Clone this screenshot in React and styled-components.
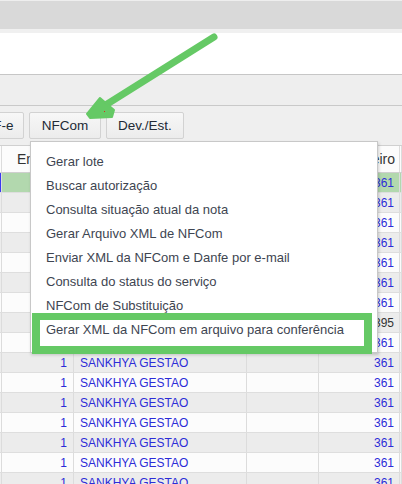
import React from 'react'
import styled, {createGlobalStyle} from 'styled-components'

const green = '#65c965'
const linkBlue = '#2c2cd8'

const GlobalStyle = createGlobalStyle`
	html, body {
		margin: 0;
		padding: 0;
		background: #fff;
		font-family: "Liberation Sans", Arial, sans-serif;
	}
`

const Page = styled.div`
	position: relative;
	width: 402px;
	height: 484px;
	overflow: hidden;
`

const TopBar = styled.div`
	height: 28px;
	border-top: 1px solid #eeeeee;
	background: #d9d9d9;
`

const TopStrip = styled.div`
	height: 4px;
	background: #f0f0f0;
`

const FilterArea = styled.div`
	height: 41px;
	background: #fff;
	border-bottom: 1px solid #c6c6c6;
`

const Panel = styled.div`
	height: 30px;
	background: #eeeeee;
	border-bottom: 1px solid #c9c9c9;
`

const Toolbar = styled.div`
	height: 39px;
	display: flex;
	align-items: flex-start;
	gap: 5px;
	padding-top: 6px;
	box-sizing: border-box;
	margin-left: -27px;
	background: #efefef;
`

const ToolButton = styled.button`
	flex: none;
	width: ${p => p.$w}px;
	height: 27px;
	padding: 0;
	border: 1px solid #d2d2d2;
	border-radius: 2px;
	background: linear-gradient(#f7f7f7, #ececec);
	color: #222a36;
	font-family: "Liberation Sans", Arial, sans-serif;
	font-size: 13.5px;
	text-align: center;
`

const Table = styled.div`
	border-top: 1px solid #d0d0d0;
`

const Row = styled.div`
	display: grid;
	grid-template-columns: 2px 72px 173px 72px 81px 2px;
	height: ${p => (p.$head ? 26 : 19)}px;
	border-bottom: 1px solid ${p => (p.$head ? '#cfcfcf' : '#dedede')};
	background: ${p => (p.$selected ? '#b2d8ae' : p.$odd ? '#ececec' : '#fcfcfc')};
	font-size: ${p => (p.$head ? 14 : 12)}px;
	color: ${p => (p.$head ? '#333' : linkBlue)};
	line-height: ${p => (p.$head ? 26 : 20)}px;
`

const Cell = styled.div`
	border-right: 1px solid #dcdcdc;
	padding: 0 ${p => p.$pr || 0}px 0 ${p => p.$pl || 0}px;
	text-align: ${p => (p.$right ? 'right' : 'left')};
	white-space: nowrap;
	overflow: hidden;
	color: ${p => (p.$plain ? '#333' : 'inherit')};
	background: ${p => (p.$mark ? '#3a3af0' : 'transparent')};
`

const Menu = styled.div`
	position: absolute;
	left: 30px;
	top: 141px;
	width: 346px;
	padding: 8px 0 10px;
	background: #fff;
	border: 1px solid #c8c8c8;
	box-shadow: 1px 2px 3px rgba(0, 0, 0, 0.18);
	z-index: 2;
`

const MenuItem = styled.div`
	height: 24px;
	line-height: 24px;
	padding-left: 15px;
	font-size: 13px;
	color: #3e4551;
	white-space: nowrap;
`

const Highlight = styled.div`
	position: absolute;
	left: 32px;
	top: 313px;
	width: 324px;
	height: 26px;
	border: solid ${green};
	border-width: 7px 8px 8px 8px;
	z-index: 3;
`

const Arrow = styled.svg`
	position: absolute;
	left: 80px;
	top: 28px;
	z-index: 3;
`

const menuItems = [
	'Gerar lote',
	'Buscar autorização',
	'Consulta situação atual da nota',
	'Gerar Arquivo XML de NFCom',
	'Enviar XML da NFCom e Danfe por e-mail',
	'Consulta do status do serviço',
	'NFCom de Substituição',
	'Gerar XML da NFCom em arquivo para conferência',
]

const rows = Array.from({length: 16}, (_, i) => ({
	value: i === 7 ? '395' : '361',
}))

const App = () => (
	<Page>
		<GlobalStyle />
		<TopBar />
		<TopStrip />
		<FilterArea />
		<Panel />
		<Toolbar>
			<ToolButton $w={51}>NF-e</ToolButton>
			<ToolButton $w={72}>NFCom</ToolButton>
			<ToolButton $w={78}>Dev./Est.</ToolButton>
		</Toolbar>
		<Table>
			<Row $head>
				<Cell />
				<Cell $pl={15}>Empresa</Cell>
				<Cell $pl={7}>Nome Empresa</Cell>
				<Cell $pl={5}>Nro. Nota</Cell>
				<Cell $right $pr={4}>Parceiro</Cell>
				<Cell />
			</Row>
			{rows.map((r, i) => (
				<Row key={i} $selected={i === 0} $odd={i % 2 === 1}>
					<Cell $mark={i === 0} />
					<Cell $right $pr={6}>1</Cell>
					<Cell $pl={6}>SANKHYA GESTAO</Cell>
					<Cell />
					<Cell $right $pr={5} $plain={r.value === '395'}>{r.value}</Cell>
					<Cell />
				</Row>
			))}
		</Table>

		<Menu>
			{menuItems.map(item => (
				<MenuItem key={item}>{item}</MenuItem>
			))}
		</Menu>
		<Highlight />

		<Arrow width="142" height="94" viewBox="80 28 142 94">
			<line x1="214" y1="37" x2="104" y2="106" stroke={green} strokeWidth="7" strokeLinecap="round" />
			<polygon
				points="87,114 100,98 114,110 112,117 90,118"
				fill={green}
				stroke={green}
				strokeWidth="2"
				strokeLinejoin="round"
			/>
			<rect x="104" y="111" width="1" height="1" fill="#e02020" />
		</Arrow>
	</Page>
)

export default App
